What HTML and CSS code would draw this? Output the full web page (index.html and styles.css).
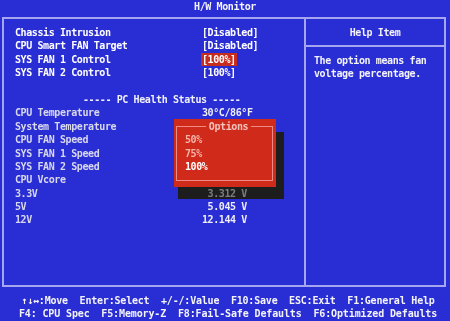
FILE: index.html
```html
<!DOCTYPE html>
<html>
<head>
<meta charset="utf-8">
<link rel="stylesheet" href="styles.css">
</head>
<body>
<div class="screen">
  <header class="title">H/W Monitor</header>
  <div class="frame">
    <section class="main">
      <div class="row top"><span>Chassis Intrusion</span><span>[Disabled]</span></div>
      <div class="row top"><span>CPU Smart FAN Target</span><span>[Disabled]</span></div>
      <div class="row top"><span>SYS FAN 1 Control</span><span class="sel">[100%]</span></div>
      <div class="row top"><span>SYS FAN 2 Control</span><span>[100%]</span></div>
      <div class="row blank"></div>
      <div class="row heading">----- PC Health Status -----</div>
      <div class="row health"><span>CPU Temperature</span><span class="val">30°C/86°F</span></div>
      <div class="row health"><span>System Temperature</span><span class="val"></span></div>
      <div class="row health"><span>CPU FAN Speed</span><span class="val"></span></div>
      <div class="row health"><span>SYS FAN 1 Speed</span><span class="val"></span></div>
      <div class="row health"><span>SYS FAN 2 Speed</span><span class="val"></span></div>
      <div class="row health"><span>CPU Vcore</span><span class="val"></span></div>
      <div class="row health"><span>3.3V</span><span class="val"> 3.312 V</span></div>
      <div class="row health"><span>5V</span><span class="val"> 5.045 V</span></div>
      <div class="row health"><span>12V</span><span class="val">12.144 V</span></div>

      <div class="shadow"></div>
      <div class="popup">
        <fieldset class="opts">
          <legend>Options</legend>
          <div class="opt">50%</div>
          <div class="opt">75%</div>
          <div class="opt cur">100%</div>
        </fieldset>
      </div>
    </section>
    <aside class="help">
      <div class="help-head">Help Item</div>
      <div class="help-body">The option means fan<br>voltage percentage.</div>
    </aside>
  </div>
  <footer class="keys">
    <div class="keyline">↑↓↔:Move  Enter:Select  +/-/:Value  F10:Save  ESC:Exit  F1:General Help</div>
    <div class="keyline wide">F4: CPU Spec  F5:Memory-Z  F8:Fail-Safe Defaults  F6:Optimized Defaults</div>
  </footer>
</div>
</body>
</html>
```
FILE: styles.css
```css
html, body {
  margin: 0;
  padding: 0;
  background: #292dd4;
}
.screen {
  width: 450px;
  height: 321px;
  overflow: hidden;
  background: #292dd4;
  color: #f2f2f8;
  font-family: "DejaVu Sans Mono", "Liberation Mono", monospace;
  font-weight: bold;
  font-size: 10px;
  letter-spacing: -0.4px;
}
.title {
  height: 17px;
  line-height: 13px;
  text-align: center;
  color: #f4f4f8;
}
.frame {
  margin-left: 2px;
  width: 440px;
  height: 266px;
  border: 2px solid #a6a6f0;
  display: grid;
  grid-template-columns: 300px 140px;
}
.main {
  position: relative;
  padding: 7px 0 0 11px;
}
.row {
  display: grid;
  grid-template-columns: 187px auto;
  height: 13.4px;
  line-height: 13.4px;
  white-space: pre;
}
.row.top { color: #ffffff; }
.row.health { color: #d8d8ec; }
.row.health .val { color: #eeeef6; }
.row.heading {
  display: block;
  padding-left: 68px;
  color: #f0f0f8;
}
.sel {
  justify-self: start;
  background: #c82c1e;
  color: #ffffff;
  padding: 0 1px;
  margin-left: -1px;
}
.shadow {
  position: absolute;
  left: 174px;
  top: 113px;
  width: 106px;
  height: 68px;
  backdrop-filter: grayscale(1) brightness(0.52);
}
.popup {
  position: absolute;
  left: 170px;
  top: 100px;
  width: 102px;
  height: 68px;
  background: #d02a1a;
  box-sizing: border-box;
  padding: 1px 3px 0 2px;
}
.opts {
  margin: 0;
  padding: 0 0 6px 8px;
  min-width: 0;
  border: 1px solid #ee8c84;
}
.opts legend {
  margin: 0 auto;
  padding: 0 3px;
  line-height: 13.4px;
  color: #f6c2bc;
}
.opt {
  height: 13.4px;
  line-height: 13.4px;
  color: #f6b4a8;
}
.opt.cur { color: #ffffff; }
.help {
  border-left: 2px solid #a6a6f0;
}
.help-head {
  height: 26px;
  line-height: 27px;
  text-align: center;
  border-bottom: 2px solid #a6a6f0;
  color: #f2f2f8;
}
.help-body {
  padding: 7px 0 0 8px;
  line-height: 13.4px;
  color: #f2f2f8;
}
.keys {
  padding: 7px 0 0 6px;
  text-align: center;
  color: #f4f4f8;
}
.keyline {
  height: 13px;
  line-height: 13px;
  white-space: pre;
  letter-spacing: -0.2px;
}
.keyline.wide {
  letter-spacing: -0.13px;
}
```
